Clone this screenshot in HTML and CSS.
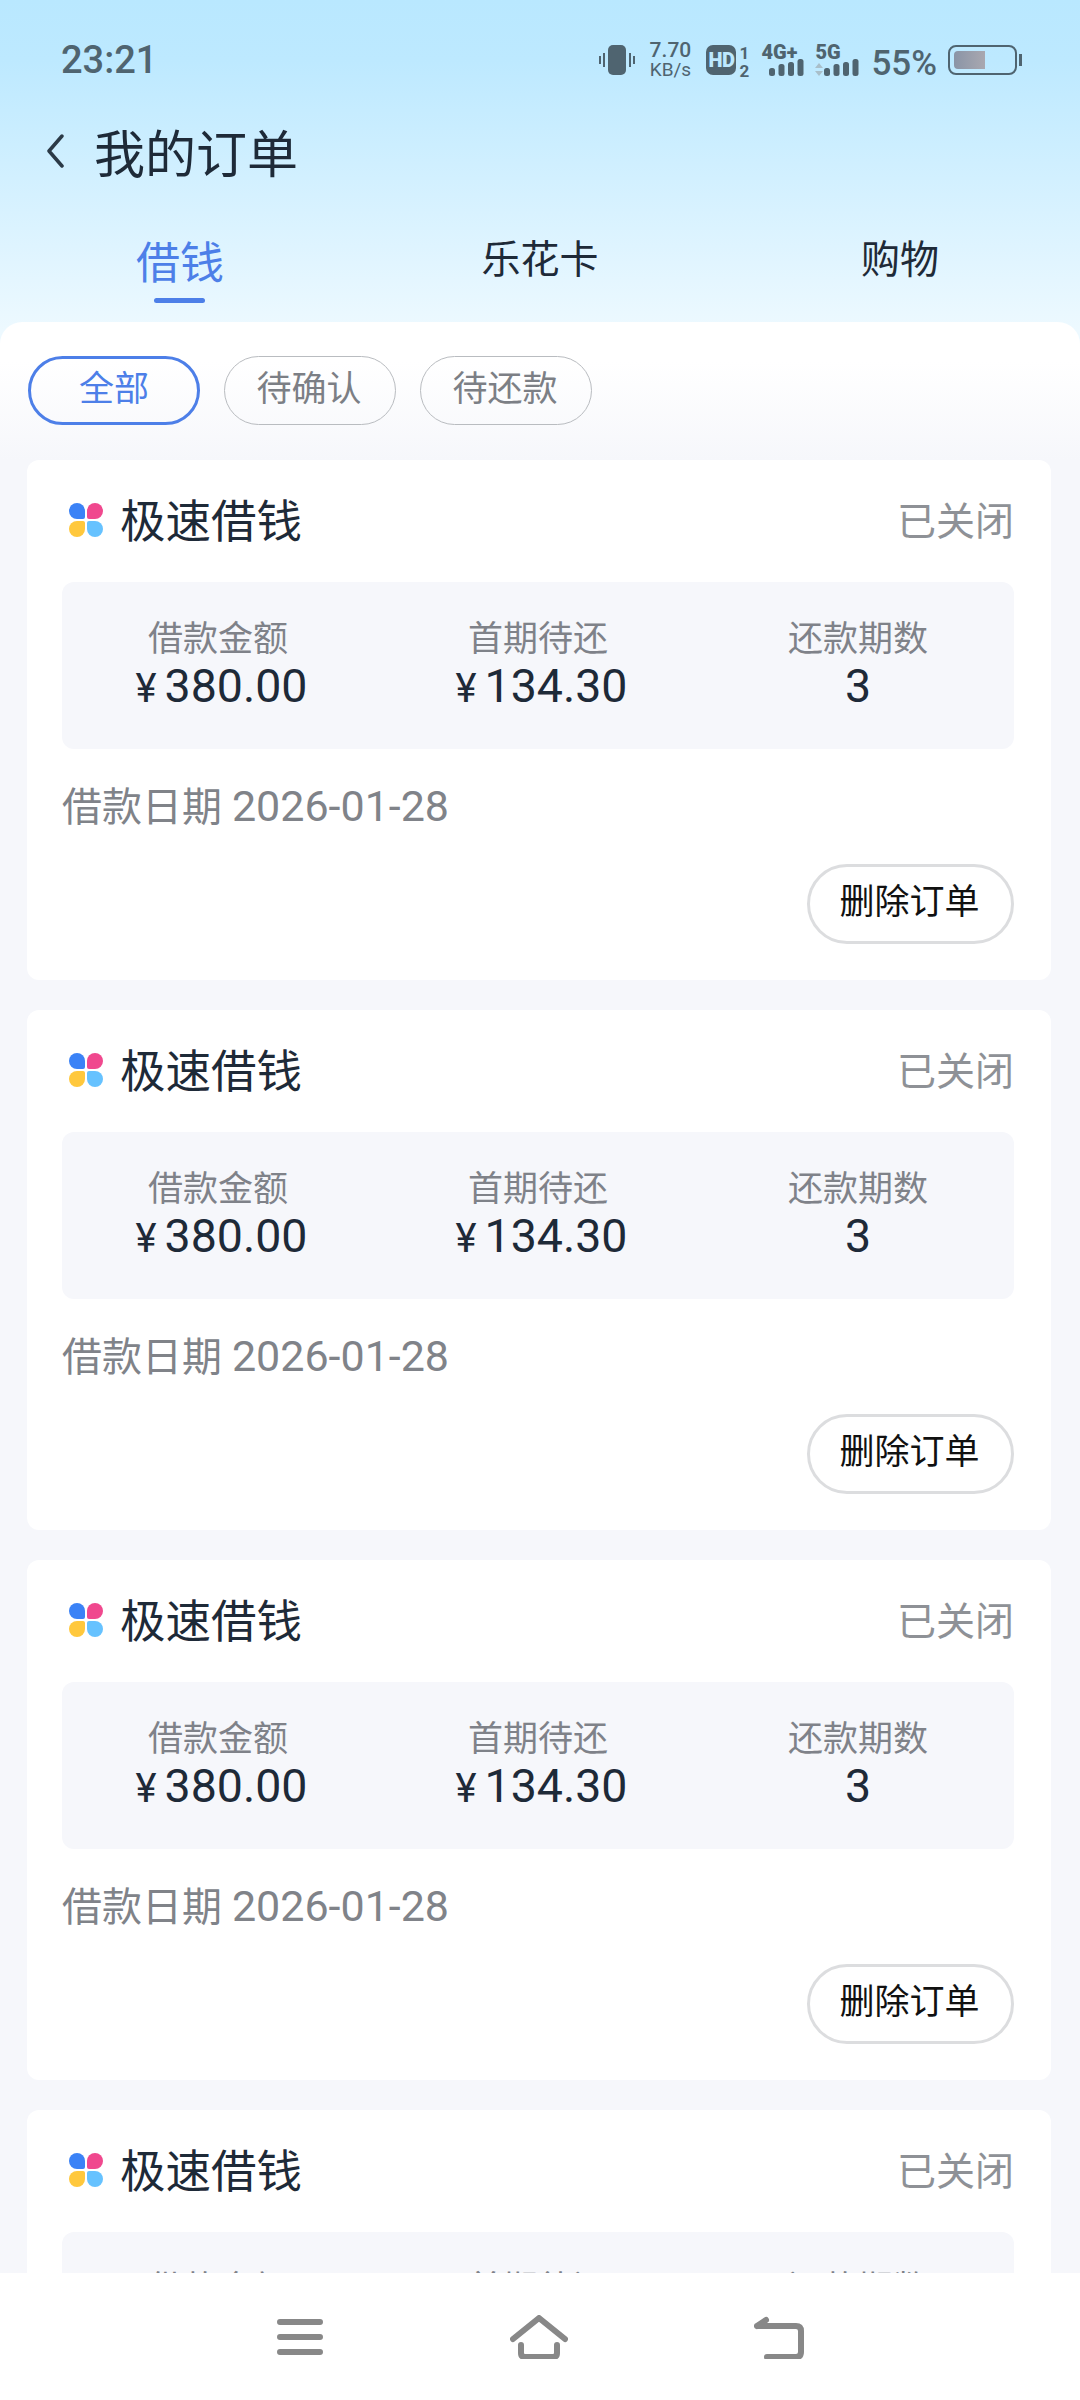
FILE: index.html
```html
<!DOCTYPE html>
<html>
	<head>
		<meta charset="utf-8">
		<title>我的订单</title>
		<link rel="stylesheet" href="styles.css">
	</head>
	<body>
		<svg class="defs" width="0" height="0">
			<symbol id="logo" viewBox="0 0 34 34">
				<path fill="#3b82f6" d="M8 0a8 8 0 0 1 8 8v6a2 2 0 0 1-2 2H8A8 8 0 0 1 8 0z"/>
				<path fill="#f0488e" transform="rotate(90 17 17)" d="M8 0a8 8 0 0 1 8 8v6a2 2 0 0 1-2 2H8A8 8 0 0 1 8 0z"/>
				<path fill="#66c2ff" transform="rotate(180 17 17)" d="M8 0a8 8 0 0 1 8 8v6a2 2 0 0 1-2 2H8A8 8 0 0 1 8 0z"/>
				<path fill="#ffc83d" transform="rotate(270 17 17)" d="M8 0a8 8 0 0 1 8 8v6a2 2 0 0 1-2 2H8A8 8 0 0 1 8 0z"/>
			</symbol>
			<symbol id="bars" viewBox="0 0 35 17">
				<rect x="0" y="9" width="6" height="8" rx="2.5"/>
				<rect x="9.5" y="5" width="6" height="12" rx="2.5"/>
				<rect x="19" y="3" width="6" height="14" rx="2.5"/>
				<rect x="28.5" y="0" width="6" height="17" rx="2.5"/>
			</symbol>
		</svg>
		<div id="phone">
			<div class="status">
				<span class="time">23:21</span>
				<div class="status-right">
					<svg class="ic-vibrate" width="36" height="30" viewBox="0 0 36 30">
						<rect x="9" y="0" width="18" height="30" rx="5" fill="#4f6470"/>
						<path d="M5 8v14M1 11v8M31 8v14M35 11v8" stroke="#4f6470" stroke-width="2" fill="none"/>
					</svg>
					<div class="speed"><span>7.70</span><span>KB/s</span></div>
					<div class="hd">HD</div>
					<div class="sims"><span>1</span><span>2</span></div>
					<div class="net net-4g">
						<span>4G+</span>
						<svg class="bars" width="35" height="17"><use href="#bars"/></svg>
					</div>
					<div class="net net-5g">
						<span>5G</span>
						<div class="net-row">
							<svg width="8" height="13" viewBox="0 0 8 13"><path fill="#a9bfca" d="M4 0l4 5H0zM0 8h8l-4 5z"/></svg>
							<svg class="bars" width="35" height="17"><use href="#bars"/></svg>
						</div>
					</div>
					<span class="pct">55%</span>
					<div class="battery"><div class="battery-fill"></div></div>
					<div class="battery-tip"></div>
				</div>
			</div>

			<div class="titlebar">
				<svg class="back" width="18" height="36" viewBox="0 0 18 36"><path d="M16 3L3 18l13 15" stroke="#2b3a47" stroke-width="3.5" fill="none" stroke-linecap="round" stroke-linejoin="round"/></svg>
				<h1>我的订单</h1>
			</div>

			<div class="tabs">
				<div class="tab active">借钱</div>
				<div class="tab">乐花卡</div>
				<div class="tab">购物</div>
			</div>

			<div class="sheet">
				<div class="chips">
					<div class="chip on">全部</div>
					<div class="chip">待确认</div>
					<div class="chip">待还款</div>
				</div>

				<div class="card">
					<div class="card-head">
						<svg class="logo" width="34" height="34"><use href="#logo"/></svg>
						<span class="card-title">极速借钱</span>
						<span class="card-state">已关闭</span>
					</div>
					<div class="info">
						<div class="col"><div class="lbl">借款金额</div><div class="val"><span class="yen">¥</span>380.00</div></div>
						<div class="col"><div class="lbl">首期待还</div><div class="val"><span class="yen">¥</span>134.30</div></div>
						<div class="col"><div class="lbl">还款期数</div><div class="val">3</div></div>
					</div>
					<div class="date">借款日期 <span class="num">2026-01-28</span></div>
					<div class="actions"><div class="btn">删除订单</div></div>
				</div>

				<div class="card">
					<div class="card-head">
						<svg class="logo" width="34" height="34"><use href="#logo"/></svg>
						<span class="card-title">极速借钱</span>
						<span class="card-state">已关闭</span>
					</div>
					<div class="info">
						<div class="col"><div class="lbl">借款金额</div><div class="val"><span class="yen">¥</span>380.00</div></div>
						<div class="col"><div class="lbl">首期待还</div><div class="val"><span class="yen">¥</span>134.30</div></div>
						<div class="col"><div class="lbl">还款期数</div><div class="val">3</div></div>
					</div>
					<div class="date">借款日期 <span class="num">2026-01-28</span></div>
					<div class="actions"><div class="btn">删除订单</div></div>
				</div>

				<div class="card">
					<div class="card-head">
						<svg class="logo" width="34" height="34"><use href="#logo"/></svg>
						<span class="card-title">极速借钱</span>
						<span class="card-state">已关闭</span>
					</div>
					<div class="info">
						<div class="col"><div class="lbl">借款金额</div><div class="val"><span class="yen">¥</span>380.00</div></div>
						<div class="col"><div class="lbl">首期待还</div><div class="val"><span class="yen">¥</span>134.30</div></div>
						<div class="col"><div class="lbl">还款期数</div><div class="val">3</div></div>
					</div>
					<div class="date">借款日期 <span class="num">2026-01-28</span></div>
					<div class="actions"><div class="btn">删除订单</div></div>
				</div>

				<div class="card">
					<div class="card-head">
						<svg class="logo" width="34" height="34"><use href="#logo"/></svg>
						<span class="card-title">极速借钱</span>
						<span class="card-state">已关闭</span>
					</div>
					<div class="info">
						<div class="col"><div class="lbl">借款金额</div><div class="val"><span class="yen">¥</span>380.00</div></div>
						<div class="col"><div class="lbl">首期待还</div><div class="val"><span class="yen">¥</span>134.30</div></div>
						<div class="col"><div class="lbl">还款期数</div><div class="val">3</div></div>
					</div>
					<div class="date">借款日期 <span class="num">2026-01-28</span></div>
					<div class="actions"><div class="btn">删除订单</div></div>
				</div>
			</div>

			<div class="navbar">
				<svg width="46" height="44" viewBox="0 0 46 44"><path d="M3 7h40M3 22h40M3 37h40" stroke="#888" stroke-width="6" stroke-linecap="round" fill="none"/></svg>
				<svg width="58" height="44" viewBox="0 0 58 44"><path d="M3 24L29 3l26 21M11 30v8q0 4 4 4h28q4 0 4-4v-8" stroke="#888" stroke-width="6" stroke-linecap="round" stroke-linejoin="round" fill="none"/></svg>
				<svg width="50" height="44" viewBox="0 0 50 44"><path d="M3 11h39q5 0 5 5v21q0 5-5 5H13M3 11l9-6" stroke="#888" stroke-width="6" stroke-linecap="round" stroke-linejoin="round" fill="none"/></svg>
			</div>
		</div>
	</body>
</html>
```

FILE: styles.css
```css
* {
	box-sizing: border-box;
}
html, body {
	margin: 0;
	padding: 0;
}
body {
	font-family: Roboto, "Noto Sans CJK SC", sans-serif;
}
.defs {
	position: absolute;
}
#phone {
	position: relative;
	width: 1080px;
	height: 2400px;
	overflow: hidden;
	background: linear-gradient(#b9e8ff 0, #bde9ff 60px, #edf9ff 330px) no-repeat 0 0 / 100% 360px;
}

/* status bar */
.status {
	height: 120px;
	padding: 40px 58px 0 61px;
	display: flex;
	justify-content: space-between;
	color: #4f6470;
}
.time {
	font-size: 38px;
	font-weight: 500;
	line-height: 40px;
}
.status-right {
	display: flex;
	align-items: flex-start;
	height: 40px;
	padding-top: 5px;
}
.speed {
	display: flex;
	flex-direction: column;
	align-items: center;
	width: 44px;
	margin: -5px 0 0 13px;
	font-size: 19px;
	line-height: 20px;
}
.speed span:first-child {
	font-size: 21px;
	font-weight: 500;
}
.hd {
	width: 30px;
	height: 30px;
	margin-left: 14px;
	border-radius: 7px;
	background: #4f6470;
	color: #bde9ff;
	font-size: 20px;
	font-weight: 900;
	line-height: 30px;
	text-align: center;
	letter-spacing: -0.5px;
}
.sims {
	display: flex;
	flex-direction: column;
	align-items: center;
	width: 12px;
	margin: -1px 0 0 2px;
	font-size: 17px;
	font-weight: 700;
	line-height: 18px;
}
.net {
	display: flex;
	flex-direction: column;
	font-size: 20px;
	font-weight: 900;
	line-height: 14px;
}
.net-4g {
	width: 43px;
	margin-left: 11px;
	align-items: flex-end;
}
.net-4g span {
	align-self: flex-start;
}
.net-5g {
	width: 44px;
	margin-left: 11px;
}
.net-row {
	display: flex;
	justify-content: space-between;
	align-items: flex-end;
}
.bars {
	fill: #4f6470;
}
.pct {
	margin: 3px 0 0 12px;
	font-size: 35px;
	font-weight: 500;
	line-height: 32px;
}
.battery {
	width: 69px;
	height: 30px;
	margin-left: 11px;
	padding: 4px;
	border: 2px solid #4f6470;
	border-radius: 8px;
}
.battery-fill {
	width: 31px;
	height: 100%;
	border-radius: 4px 0 0 4px;
	background: linear-gradient(90deg, #8a94a6, #a9a8b0);
}
.battery-tip {
	width: 3px;
	height: 12px;
	margin: 9px 0 0 2px;
	background: #4f6470;
}

/* title and tabs */
.titlebar {
	height: 66px;
	padding-bottom: 4px;
	display: flex;
	align-items: center;
	padding-left: 46px;
}
.back {
	flex: none;
}
h1 {
	margin: 0 0 0 30px;
	font-size: 51px;
	font-weight: 400;
	color: #1e2a38;
}
.tabs {
	display: grid;
	grid-template-columns: 360px 360px 360px;
	height: 136px;
}
.tab {
	position: relative;
	padding-top: 46px;
	font-size: 39px;
	line-height: 56px;
	text-align: center;
	color: #1e2a38;
}
.tab.active {
	font-size: 44px;
	line-height: 64px;
	color: #4d7fe8;
}
.tab.active::after {
	content: "";
	position: absolute;
	left: 154px;
	top: 112px;
	width: 51px;
	height: 5px;
	border-radius: 3px;
	background: #4d7fe8;
}

/* white sheet with the list */
.sheet {
	border-radius: 22px 22px 0 0;
	background: linear-gradient(#ffffff 0, #ffffff 40px, #f6f7fb 138px);
	padding: 34px 29px 0 27px;
	height: 2078px;
}
.chips {
	display: flex;
	gap: 24px;
	padding-left: 1px;
	margin-bottom: 35px;
}
.chip {
	width: 172px;
	height: 69px;
	padding-right: 2px;
	border: 1px solid #b9bcc0;
	border-radius: 35px;
	font-size: 35px;
	line-height: 65px;
	text-align: center;
	color: #7c7f85;
}
.chip.on {
	padding-right: 0;
	border: 3px solid #4d7fe8;
	color: #4d7fe8;
	line-height: 61px;
}
.card {
	height: 520px;
	margin-bottom: 30px;
	padding: 0 37px 0 35px;
	border-radius: 12px;
	background: #fff;
}
.card-head {
	height: 122px;
	padding-bottom: 6px;
	display: flex;
	align-items: center;
}
.logo {
	margin: 3px 17px 0 7px;
	flex: none;
}
.card-title {
	font-size: 45.5px;
	color: #1e2a38;
}
.card-state {
	margin-left: auto;
	font-size: 39px;
	color: #8e9196;
}
.info {
	display: grid;
	grid-template-columns: 320px 320px 320px;
	justify-content: center;
	height: 167px;
	padding-top: 35px;
	border-radius: 12px;
	background: #f6f7fb;
	text-align: center;
}
.lbl {
	font-size: 35px;
	line-height: 46px;
	color: #7f8289;
}
.val {
	margin-top: -1px;
	font-size: 46.5px;
	line-height: 48px;
	color: #1e2a38;
}
.yen {
	font-size: 40px;
	margin: 0 8px 0 7px;
}
.date {
	margin-top: 29px;
	font-size: 40px;
	line-height: 56px;
	height: 56px;
	color: #808389;
}
.date .num {
	font-size: 43px;
}
.actions {
	display: flex;
	justify-content: flex-end;
	margin-top: 30px;
}
.btn {
	width: 207px;
	height: 80px;
	padding-right: 2px;
	border: 3px solid #dcdddf;
	border-radius: 40px;
	font-size: 35px;
	line-height: 72px;
	text-align: center;
	color: #111;
}

/* system navigation bar */
.navbar {
	position: absolute;
	left: 0;
	bottom: 0;
	width: 1080px;
	height: 127px;
	padding: 42px 276px 0 277px;
	display: flex;
	justify-content: space-between;
	align-items: flex-start;
	background: #fff;
}
```
